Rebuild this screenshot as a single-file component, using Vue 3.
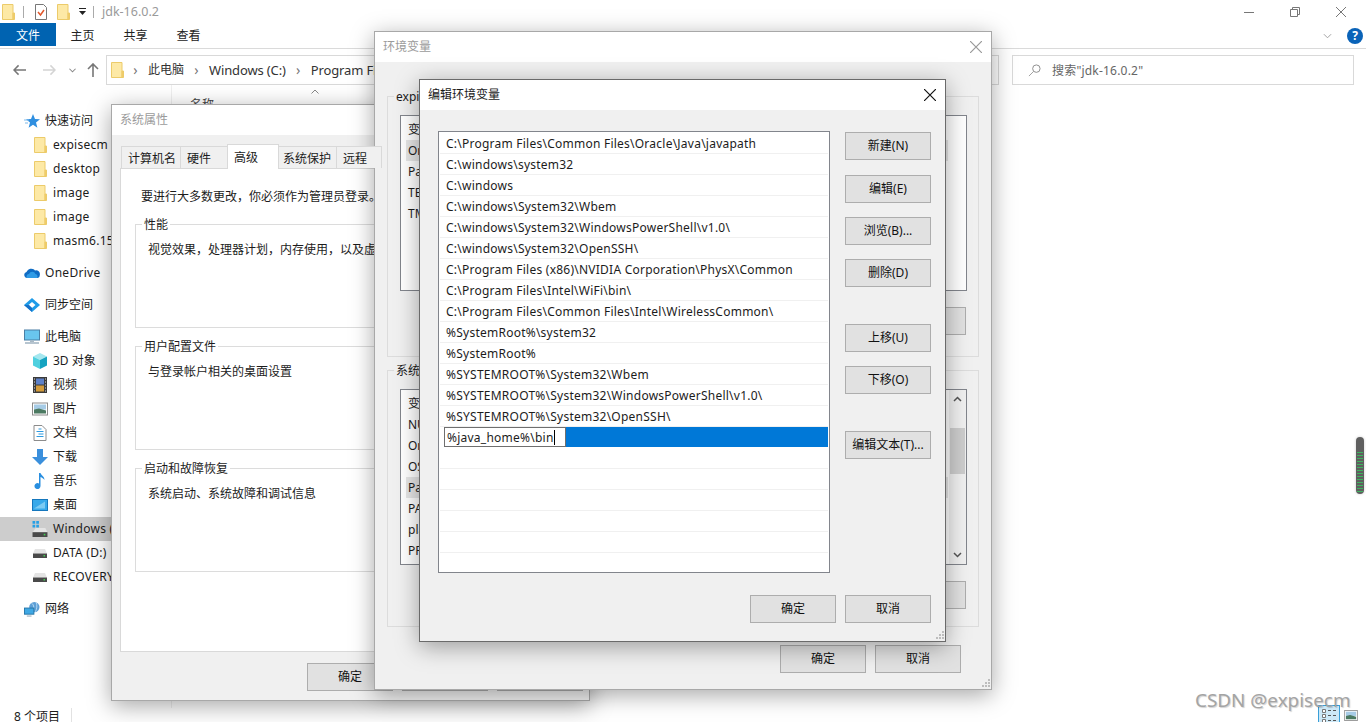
<script setup>
const side = [
  { t: '快速访问', i: 'star', lv: 0, mt: 0 },
  { t: 'expisecm', i: 'folder', lv: 1, lat: true },
  { t: 'desktop', i: 'folder', lv: 1, lat: true },
  { t: 'image', i: 'folder', lv: 1, lat: true },
  { t: 'image', i: 'folder', lv: 1, lat: true },
  { t: 'masm6.15', i: 'folder', lv: 1, lat: true },
  { t: 'OneDrive', i: 'cloud', lv: 0, mt: 8, lat: true },
  { t: '同步空间', i: 'sync', lv: 0, mt: 8 },
  { t: '此电脑', i: 'pc', lv: 0, mt: 8 },
  { t: '3D 对象', i: 'cube', lv: 1 },
  { t: '视频', i: 'film', lv: 1 },
  { t: '图片', i: 'pic', lv: 1 },
  { t: '文档', i: 'doc', lv: 1 },
  { t: '下载', i: 'down', lv: 1 },
  { t: '音乐', i: 'note', lv: 1 },
  { t: '桌面', i: 'desk', lv: 1 },
  { t: 'Windows (C:)', i: 'winDrive', lv: 1, sel: true, lat: true },
  { t: 'DATA (D:)', i: 'drive', lv: 1, lat: true },
  { t: 'RECOVERY (E:)', i: 'drive', lv: 1, lat: true },
  { t: '网络', i: 'net', lv: 0, mt: 8 },
]
const paths = [
  'C:\\Program Files\\Common Files\\Oracle\\Java\\javapath',
  'C:\\windows\\system32',
  'C:\\windows',
  'C:\\windows\\System32\\Wbem',
  'C:\\windows\\System32\\WindowsPowerShell\\v1.0\\',
  'C:\\windows\\System32\\OpenSSH\\',
  'C:\\Program Files (x86)\\NVIDIA Corporation\\PhysX\\Common',
  'C:\\Program Files\\Intel\\WiFi\\bin\\',
  'C:\\Program Files\\Common Files\\Intel\\WirelessCommon\\',
  '%SystemRoot%\\system32',
  '%SystemRoot%',
  '%SYSTEMROOT%\\System32\\Wbem',
  '%SYSTEMROOT%\\System32\\WindowsPowerShell\\v1.0\\',
  '%SYSTEMROOT%\\System32\\OpenSSH\\',
]
const userVars = ['变量', 'OneDrive', 'Path', 'TEMP', 'TMP']
const sysVars = ['变量', 'NUMBER_OF_PROCESSORS', 'OnlineServices', 'OS', 'Path', 'PATHEXT', 'platformcode', 'PROCESSOR_ARCHITECTURE']
const adminText = '要进行大多数更改\uFF0C你必须作为管理员登录\u3002'
const perfText = '视觉效果\uFF0C处理器计划\uFF0C内存使用\uFF0C以及虚拟内存'
</script>

<template>
  <div class="desktop">
    <svg class="defs" width="0" height="0" aria-hidden="true">
      <symbol id="folder" viewBox="0 0 13 16">
        <path d="M.5.500H11v15H.500z" fill="#fde9a6" stroke="#eccb6a" stroke-width="1"/>
        <path d="M11 9h1.500v6.500H11z" fill="#f5cd66" stroke="#eccb6a" stroke-width="1"/>
      </symbol>
      <symbol id="star" viewBox="0 0 16 16">
        <path d="M9 1l2 5 5 .3-4 3.2 1.400 5.200L9 11.800 4.600 14.700 6 9.500 2 6.300 7 6z" fill="#2f8fe0"/>
        <path d="M0 7h5M1 10h3" stroke="#7db9ea" stroke-width="1"/>
      </symbol>
      <symbol id="cloud" viewBox="0 0 16 12">
        <path d="M3 11a3 3 0 0 1-.5-5.900A5 5 0 0 1 11 3.500 3.800 3.800 0 0 1 15.800 8 3 3 0 0 1 13 11z" fill="#0f6cc4"/>
        <path d="M3 11a2.500 2.500 0 0 1 2-4 3.500 3.500 0 0 1 6.500 0A2.500 2.500 0 0 1 13 11z" fill="#2f9be6"/>
      </symbol>
      <symbol id="sync" viewBox="0 0 16 14">
        <path d="M8 0l8 7-8 7-8-7z" fill="#1e9be8"/>
        <path d="M8 4l3.500 3L8 10 4.500 7z" fill="#fff"/>
        <path d="M0 7h5l3 3v4z" fill="#1670c8"/>
      </symbol>
      <symbol id="pc" viewBox="0 0 16 15">
        <rect x="0.500" y="0.500" width="15" height="10" fill="#69c5ee" stroke="#4a7fa5"/>
        <path d="M6 11h4v1.500H6z" fill="#a8b8c4"/>
        <path d="M1 13.500h14" stroke="#9fb2c0" stroke-width="1.500"/>
      </symbol>
      <symbol id="cube" viewBox="0 0 16 16">
        <path d="M8 0l7 3.500-7 3.500-7-3.500z" fill="#a5e7ef"/>
        <path d="M1 3.500l7 3.500v9l-7-3.500z" fill="#4fd0df"/>
        <path d="M15 3.500L8 7v9l7-3.500z" fill="#15a3c0"/>
      </symbol>
      <symbol id="film" viewBox="0 0 14 16">
        <rect width="14" height="16" fill="#3b3b3b"/>
        <rect x="3" y="1.500" width="8" height="6" fill="#5d80c8"/>
        <rect x="3" y="8.500" width="8" height="6" fill="#d39b3a"/>
        <path d="M1 2h1M1 5h1M1 8h1M1 11h1M1 14h1M12 2h1M12 5h1M12 8h1M12 11h1M12 14h1" stroke="#ddd" stroke-width="1"/>
      </symbol>
      <symbol id="pic" viewBox="0 0 16 13">
        <rect x="0.500" y="0.500" width="15" height="12" fill="#fff" stroke="#8c8c8c"/>
        <rect x="2" y="2" width="12" height="5" fill="#a6cbe6"/>
        <path d="M2 7l5-1 7 2v3H2z" fill="#4c7a62"/>
      </symbol>
      <symbol id="doc" viewBox="0 0 13 16">
        <path d="M.5.500h8l4 4v11H.500z" fill="#fff" stroke="#8c8c8c"/>
        <path d="M5 4h3M3 6.500h7M5 9h5M3 11.500h7" stroke="#2e9ae0" stroke-width="1"/>
      </symbol>
      <symbol id="down" viewBox="0 0 16 16">
        <path d="M5 0h6v8h5l-8 8-8-8h5z" fill="#3a8fdc"/>
      </symbol>
      <symbol id="note" viewBox="0 0 12 16">
        <path d="M5 0h1.500c.5 2.500 4 3 4 7-1-1.500-2.500-2.500-4-3v9a3 3 0 1 1-1.500-2.500z" fill="#2a8fe0"/>
      </symbol>
      <symbol id="desk" viewBox="0 0 16 12">
        <rect x="0.500" y="0.500" width="15" height="11" fill="#37a9ea" stroke="#1577bd"/>
        <path d="M2 9.500l11-7v7z" fill="#7ccbf3"/>
      </symbol>
      <symbol id="drive" viewBox="0 0 14 9">
        <path d="M2 0h10l2 4.500H0z" fill="#e4e4e4"/>
        <rect y="4.500" width="14" height="4.500" fill="#4a4a4a"/>
        <rect x="10.500" y="6" width="1.500" height="1.500" fill="#40d050"/>
      </symbol>
      <symbol id="winDrive" viewBox="0 0 14 15">
        <path d="M0 0h2.500v2.500H0zM3.500 0H6v2.500H3.500zM0 3.500h2.500V6H0zM3.500 3.500H6V6H3.500z" fill="#27a0e6"/>
        <path d="M3 6.500h9l2 4H0z" fill="#e4e4e4"/>
        <rect y="10.500" width="14" height="4.500" fill="#4a4a4a"/>
        <rect x="10.500" y="12" width="1.500" height="1.500" fill="#40d050"/>
      </symbol>
      <symbol id="net" viewBox="0 0 17 16">
        <circle cx="11" cy="6" r="5.500" fill="#5d9fd6"/>
        <path d="M8 2c3 1 3 7 1 9M13 1c1 3 1 7-1 10" stroke="#b8dbf3" fill="none"/>
        <rect x="0.500" y="7" width="10" height="6.500" fill="#3fa8e4" stroke="#2575a8"/>
        <path d="M3 15.500h5" stroke="#8aa0b0" stroke-width="1"/>
      </symbol>
      <symbol id="grip" viewBox="0 0 9 9">
        <path d="M7 0h2v2H7zM4 3h2v2H4zM7 3h2v2H7zM1 6h2v2H1zM4 6h2v2H4zM7 6h2v2H7z" fill="#bdbdbd"/>
      </symbol>
    </svg>

    <div class="explorer">
      <header class="titlebar">
        <svg class="tb-folder"><use href="#folder"/></svg>
        <span class="tb-sep"></span>
        <svg class="tb-check" viewBox="0 0 12 16">
          <path d="M.5.500h8l3 3v12H.500z" fill="#fff" stroke="#777"/>
          <path d="M3 8l2.500 3L9 6" fill="none" stroke="#e2572b" stroke-width="1.500"/>
        </svg>
        <svg class="tb-folder folder2"><use href="#folder"/></svg>
        <svg class="tb-drop" viewBox="0 0 7 7"><path d="M0 0h7v1H0zM0 3h7L3.500 7z" fill="#222"/></svg>
        <span class="tb-sep sep2"></span>
        <span class="tb-title">jdk-16.0.2</span>
        <div class="winctl">
          <svg viewBox="0 0 10 10"><path d="M0 5.500h10" stroke="#777"/></svg>
          <svg viewBox="0 0 10 10"><path d="M.5 2.500h7v7h-7zM2.500 2.500v-2h7v7h-2" fill="none" stroke="#777"/></svg>
          <svg viewBox="0 0 10 10"><path d="M0 0l10 10M10 0L0 10" stroke="#777"/></svg>
        </div>
      </header>

      <nav class="ribbon">
        <span class="rtab file">文件</span>
        <span class="rtab">主页</span>
        <span class="rtab">共享</span>
        <span class="rtab">查看</span>
        <svg class="r-chev" viewBox="0 0 10 6"><path d="M1 1l4 4 4-4" fill="none" stroke="#999"/></svg>
        <span class="help">?</span>
      </nav>

      <div class="addr-row">
        <svg class="nav-ic nav-back" viewBox="0 0 14 12"><path d="M6 1L1 6l5 5M1 6h13" fill="none" stroke="#777" stroke-width="1.600"/></svg>
        <svg class="nav-ic nav-fwd" viewBox="0 0 14 12"><path d="M8 1l5 5-5 5M13 6H0" fill="none" stroke="#d4d4d4" stroke-width="1.600"/></svg>
        <svg class="nav-ic nav-dn" viewBox="0 0 8 5"><path d="M.5.500L4 4 7.500.500" fill="none" stroke="#888" stroke-width="1.200"/></svg>
        <svg class="nav-ic nav-up" viewBox="0 0 12 14"><path d="M1 6l5-5 5 5M6 1v13" fill="none" stroke="#777" stroke-width="1.600"/></svg>
        <div class="addr">
          <svg class="addr-folder"><use href="#folder"/></svg>
          <span class="crumb-sep">›</span><span>此电脑</span>
          <span class="crumb-sep">›</span><span class="crumb">Windows (C:)</span>
          <span class="crumb-sep">›</span><span class="crumb">Program Files</span>
        </div>
        <div class="search">
          <svg class="s-ic" viewBox="0 0 14 14"><circle cx="9" cy="5" r="4" fill="none" stroke="#888"/><path d="M6 8l-5 5" stroke="#999"/></svg>
          <span class="s-text-q">搜索"jdk-16.0.2"</span>
        </div>
      </div>

      <div class="exp-body">
        <aside class="sidebar">
          <div v-for="(s, n) in side" :key="n" class="s-row" :class="{ sel: s.sel, sub: s.lv === 1 }" :style="{ marginTop: (s.mt || 0) + 'px' }">
            <span class="s-icon"><svg :class="'ic-' + s.i"><use :href="'#' + s.i"/></svg></span>
            <span class="s-text" :class="{ lat: s.lat }">{{ s.t }}</span>
          </div>
        </aside>
        <section class="files">
          <svg class="sort-up" viewBox="0 0 8 5"><path d="M.5 4.500L4 1l3.500 3.500" fill="none" stroke="#888"/></svg>
          <span class="col-name">名称</span>
        </section>
      </div>

      <footer class="status"><span class="count">8 个项目</span></footer>
    </div>

    <svg class="view-detail" viewBox="0 0 22 17">
      <rect x="0.500" y="0.500" width="21" height="17" fill="#cce8f7" stroke="#3a9fd8"/>
      <path d="M4.500 4.500h3v3h-3zM4.500 9.500h3v3h-3zM4.500 14.500h3v3h-3z" fill="#fff" stroke="#777"/>
      <path d="M10 5.500h3M15 5.500h3M10 10.500h3M15 10.500h3M10 15.500h3M15 15.500h3" stroke="#555"/>
    </svg>
    <svg class="view-thumb"><use href="#pic"/></svg>
    <div class="volume"><span class="vol-lines"></span></div>

    <!-- 系统属性 -->
    <div class="window win-sys">
      <div class="w-title inactive">系统属性</div>
      <div class="w-body sys-body">
        <div class="tabs">
          <span class="tab t1">计算机名</span>
          <span class="tab t2">硬件</span>
          <span class="tab t3 active">高级</span>
          <span class="tab t4">系统保护</span>
          <span class="tab t5">远程</span>
        </div>
        <div class="tabpanel">
          <p class="admin">{{ adminText }}</p>
          <div class="group sg">
            <span class="legend">性能</span>
            <p>{{ perfText }}</p>
          </div>
          <div class="group sg">
            <span class="legend">用户配置文件</span>
            <p>与登录帐户相关的桌面设置</p>
          </div>
          <div class="group sg">
            <span class="legend">启动和故障恢复</span>
            <p>系统启动、系统故障和调试信息</p>
          </div>
        </div>
        <div class="btn-row sys-foot">
          <button class="btn">确定</button>
          <button class="btn">取消</button>
          <button class="btn">应用(A)</button>
        </div>
      </div>
    </div>

    <!-- 环境变量 -->
    <div class="window win-env">
      <div class="w-title inactive">环境变量</div>
      <svg class="w-close" viewBox="0 0 10 10"><path d="M0 0l10 10M10 0L0 10" stroke="#999"/></svg>
      <div class="w-body env-body">
        <div class="group eg eg1">
          <span class="legend">expisecm 的用户变量(U)</span>
          <div class="vlist vl1">
            <div v-for="(v, n) in userVars" :key="n" class="v-row" :class="{ hl: n === 1 }">{{ v }}</div>
          </div>
          <div class="btn-row eg-btns">
            <button class="btn">新建(N)...</button>
            <button class="btn">编辑(E)...</button>
            <button class="btn">删除(D)</button>
          </div>
        </div>
        <div class="group eg eg2">
          <span class="legend">系统变量(S)</span>
          <div class="vlist vl2">
            <div v-for="(v, n) in sysVars" :key="n" class="v-row" :class="{ hl: n === 4 }">{{ v }}</div>
            <div class="vscroll">
              <svg class="sc-arrow" viewBox="0 0 9 6"><path d="M1 5l3.500-3.500L8 5" fill="none" stroke="#555" stroke-width="1.500"/></svg>
              <span class="sc-track"><span class="sc-thumb"></span></span>
              <svg class="sc-arrow" viewBox="0 0 9 6"><path d="M1 1l3.500 3.500L8 1" fill="none" stroke="#555" stroke-width="1.500"/></svg>
            </div>
          </div>
          <div class="btn-row eg-btns">
            <button class="btn">新建(W)...</button>
            <button class="btn">编辑(I)...</button>
            <button class="btn">删除(L)</button>
          </div>
        </div>
        <div class="btn-row env-foot">
          <button class="btn">确定</button>
          <button class="btn">取消</button>
        </div>
      </div>
      <svg class="grip"><use href="#grip"/></svg>
    </div>

    <!-- 编辑环境变量 -->
    <div class="window win-edit">
      <div class="w-title">编辑环境变量</div>
      <svg class="w-close dark" viewBox="0 0 10 10"><path d="M0 0l10 10M10 0L0 10" stroke="#111"/></svg>
      <div class="w-body edit-body">
        <div class="edit-main">
          <div class="plist">
            <div v-for="(p, n) in paths" :key="n" class="p-row">{{ p }}</div>
            <div class="p-row editing"><span class="p-input">%java_home%\bin<i class="caret"></i></span></div>
            <div v-for="n in 6" :key="'e' + n" class="p-row"></div>
          </div>
          <div class="p-btns">
            <button class="btn">新建(N)</button>
            <button class="btn">编辑(E)</button>
            <button class="btn">浏览(B)...</button>
            <button class="btn">删除(D)</button>
            <button class="btn b-move">上移(U)</button>
            <button class="btn">下移(O)</button>
            <button class="btn b-text">编辑文本(T)...</button>
          </div>
        </div>
        <div class="btn-row edit-foot">
          <button class="btn">确定</button>
          <button class="btn">取消</button>
        </div>
      </div>
      <svg class="grip"><use href="#grip"/></svg>
    </div>

    <div class="watermark">CSDN @expisecm</div>
  </div>
</template>

<style>
html, body { margin: 0; background: #fff; overflow: hidden; }
</style>

<style scoped>
.desktop {
  position: relative;
  width: 1366px;
  height: 722px;
  overflow: hidden;
  background: #fff;
  font: 12px/16px "Noto Sans", "Noto Sans CJK SC", sans-serif;
  color: #1c1c1c;
}
.defs { position: absolute; }
.explorer { display: flex; flex-direction: column; height: 722px; }

/* title bar */
.titlebar { display: flex; align-items: center; height: 23px; flex: none; position: relative; padding-left: 2px; }
.tb-folder { width: 13px; height: 16px; }
.folder2 { margin-left: 10px; }
.tb-sep { width: 1px; height: 12px; background: #aaa; margin-left: 8px; }
.tb-check { width: 12px; height: 16px; margin-left: 11px; }
.tb-drop { width: 7px; height: 7px; margin-left: 9px; }
.sep2 { margin-left: 7px; }
.tb-title { margin-left: 8px; color: #9a9a9a; font-size: 12.500px; }
.winctl { margin-left: auto; display: flex; gap: 36px; padding-right: 20px; }
.winctl svg { width: 10px; height: 10px; }

/* ribbon */
.ribbon { display: flex; height: 26px; box-sizing: border-box; flex: none; align-items: flex-start; border-bottom: 1px solid #dadada; }
.rtab { width: 53px; text-align: center; color: #222; line-height: 25px; }
.rtab.file { width: 56px; height: 23px; line-height: 25px; background: #0063b1; color: #fff; }
.r-chev { width: 9px; height: 6px; margin: 10px 15px 0 auto; }
.help {
  width: 16px; height: 16px; border-radius: 50%; background: #0a63b8; color: #fff; font-weight: 700;
  text-align: center; line-height: 16px; margin: 5px 3px 0 0;
}

/* address */
.addr-row { display: flex; align-items: center; height: 30px; margin-top: 6px; flex: none; position: relative; }
.nav-ic { position: absolute; }
.nav-back { left: 13px; top: 9px; width: 13px; height: 12px; }
.nav-fwd { left: 43px; top: 9px; width: 13px; height: 12px; }
.nav-dn { left: 69px; top: 13px; width: 7px; height: 5px; }
.nav-up { left: 87px; top: 8px; width: 12px; height: 14px; }
.addr {
  margin-left: 106px; width: 893px; height: 30px; border: 1px solid #d9d9d9; box-sizing: border-box;
  display: flex; align-items: center; padding-left: 4px; color: #333;
}
.addr-folder { width: 13px; height: 16px; margin-right: -1px; }
.crumb-sep { width: 25px; text-align: center; color: #777; font-size: 14px; }
.crumb { font-size: 13px; letter-spacing: -.14px; }
.search {
  margin-left: 13px; width: 342px; height: 30px; box-sizing: border-box; border: 1px solid #d9d9d9;
  display: flex; align-items: center; color: #666; padding-left: 15px;
}
.s-ic { width: 13px; height: 13px; margin-right: 11px; }
.s-text-q { letter-spacing: .2px; position: relative; top: 1px; }

/* body */
.exp-body { flex: 1; display: flex; min-height: 0; }
.sidebar { width: 171px; border-right: 1px solid #efefef; padding-top: 24px; }
.s-row { display: flex; align-items: center; height: 24px; padding-left: 24px; white-space: nowrap; overflow: hidden; }
.s-row.sub { padding-left: 32px; }
.s-row.sel { background: #cdcdcd; }
.s-icon { width: 16px; height: 16px; margin-right: 5px; display: flex; align-items: center; justify-content: center; flex: none; }
.s-icon svg { width: 16px; height: 16px; }
.s-icon .ic-folder { width: 13px; height: 16px; }
.s-icon .ic-cloud { width: 16px; height: 12px; }
.s-icon .ic-drive { width: 14px; height: 9px; }
.s-text.lat { letter-spacing: .28px; }
.files { flex: 1; position: relative; }
.sort-up { position: absolute; left: 139px; top: 4px; width: 8px; height: 5px; }
.col-name { position: absolute; left: 18px; top: 12px; color: #444; }

.status { height: 18px; flex: none; padding-left: 14px; position: relative; line-height: 18px; margin-top: -4px; transform: translateY(4px); }
.count { display: inline-block; padding-right: 11px; border-right: 1px solid #e2e2e2; height: 18px; }

.view-detail { position: absolute; left: 1318px; top: 705px; width: 22px; height: 17px; }
.view-thumb { position: absolute; left: 1344px; top: 710px; width: 14px; height: 11px; }
.volume {
  position: absolute; left: 1356px; top: 437px; width: 8px; height: 57px; border-radius: 4px; background: #5f5f5f;
  box-shadow: 0 0 3px rgba(0,0,0,.2); overflow: hidden;
}
.vol-lines {
  position: absolute; left: 1px; right: 1px; top: 15px; bottom: 2px;
  background: repeating-linear-gradient(#3fb35f 0 1px, #5f5f5f 1px 3px);
}

.watermark {
  position: absolute; left: 1195px; top: 687px; font-size: 18.900px; line-height: 26px; color: #a4a4a4;
  text-shadow: 1px 1px 1px rgba(0,0,0,.18); white-space: nowrap;
}

/* windows */
.window {
  position: absolute; box-sizing: border-box; border: 1px solid #a8a8a8; background: #f0f0f0;
  box-shadow: 0 5px 22px rgba(0,0,0,.35); display: flex; flex-direction: column;
}
.win-sys { left: 111px; top: 104px; width: 479px; height: 597px; }
.win-env { left: 374px; top: 31px; width: 618px; height: 659px; }
.win-edit { left: 419px; top: 79px; width: 527px; height: 563px; border-color: #6a6a6a; }
.w-title { height: 30px; flex: none; background: #fff; line-height: 30px; padding-left: 8px; color: #1a1a1a; }
.w-title.inactive { color: #9b9b9b; }
.w-close { position: absolute; right: 9px; top: 9px; width: 12px; height: 12px; }
.w-body { flex: 1; min-height: 0; display: flex; flex-direction: column; }
.grip { position: absolute; right: 1px; bottom: 1px; width: 9px; height: 9px; }

.btn {
  width: 86px; height: 28px; flex: none; box-sizing: border-box; padding: 0; margin: 0;
  border: 1px solid #adadad; background: #e1e1e1; color: #111; font: inherit; white-space: nowrap;
}
.btn-row { display: flex; justify-content: flex-end; gap: 9px; }

/* sys */
.sys-body { padding: 11px 7px 0 8px; }
.tabs { display: flex; height: 22px; padding-left: 1px; position: relative; z-index: 1; align-items: flex-end; }
.tab {
  box-sizing: border-box; height: 22px; line-height: 23px; background: #f0f0f0; padding-left: 6px;
  border: 1px solid #d9d9d9; border-bottom: 0; margin-right: -1px;
}
.t1 { width: 60px; }
.t2 { width: 48px; }
.t3 { width: 52px; padding-left: 6px; }
.t4 { width: 59px; padding-left: 4px; }
.t5 { width: 46px; }
.tab.active { height: 25px; background: #fff; margin-bottom: -1px; position: relative; z-index: 2; line-height: 25px; }
.tabpanel {
  height: 484px; box-sizing: border-box; background: #fff; border: 1px solid #d9d9d9; padding: 0 14px;
  display: flex; flex-direction: column;
}
.admin { margin: 20px 0 19px 6px; height: 16px; white-space: nowrap; }
.group { position: relative; box-sizing: border-box; border: 1px solid #dcdcdc; }
.legend { position: absolute; left: 6px; top: -8px; padding: 0 2px; background: #f0f0f0; white-space: nowrap; line-height: 16px; }
.sg { height: 104px; margin-bottom: 18px; flex: none; }
.sg .legend { background: #fff; }
.sg p { margin: 17px 0 0 12px; white-space: nowrap; }
.sys-foot { margin-top: 11px; justify-content: flex-start; padding-left: 187px; }

/* env */
.env-body { padding: 34px 12px 0 12px; }
.eg { width: 592px; flex: none; padding: 18px 12px 0 12px; }
.eg1 { height: 261px; }
.eg2 { height: 257px; margin-top: 13px; }
.vlist {
  position: relative; box-sizing: border-box; width: 567px; height: 176px; background: #fff;
  border: 1px solid #82858c; padding: 3px 5px; overflow: hidden;
}
.v-row { height: 21px; line-height: 22px; white-space: nowrap; padding-left: 2px; }
.v-row.hl { background: #e6e6e6; width: 540px; }
.eg-btns { margin-top: 16px; }
.vscroll {
  position: absolute; right: 0; top: 0; bottom: 0; width: 17px; background: #f0f0f0;
  display: flex; flex-direction: column; align-items: center; justify-content: space-between; padding: 6px 0;
  box-sizing: border-box;
}
.sc-arrow { width: 9px; height: 6px; flex: none; }
.sc-track { flex: 1; width: 100%; position: relative; }
.sc-thumb { display: block; width: 15px; height: 46px; background: #cdcdcd; margin: 26px 0 0 1px; }
.env-foot { margin-top: 18px; padding-right: 18px; }

/* edit */
.edit-body { padding: 21px 14px 0 18px; }
.edit-main { display: flex; gap: 15px; }
.plist { width: 392px; height: 442px; box-sizing: border-box; border: 1px solid #82858c; background: #fff; padding: 1px 1px 0; overflow: hidden; flex: none; letter-spacing: .24px; }
.p-row { height: 21px; box-sizing: border-box; border-bottom: 1px solid #f0f0f0; padding-left: 6px; line-height: 22px; white-space: nowrap; }
.p-row.editing { background: #0078d7; border: 0; margin-left: 4px; padding-left: 0; height: 20px; margin-bottom: 1px; }
.p-input {
  display: block; box-sizing: border-box; width: 122px; height: 20px; background: #fff; border: 1px solid #6f6f6f;
  line-height: 19px; padding-left: 2px;
}
.caret { display: inline-block; width: 1px; height: 15px; background: #000; vertical-align: -3px; }
.p-btns { display: flex; flex-direction: column; margin-top: 1px; gap: 14px; }
.p-btns .btn:nth-child(2) { margin-top: 1px; }
.b-move { margin-top: 23px; }
.b-text { margin-top: 23px; }
.edit-foot { margin-top: 22px; }
</style>
